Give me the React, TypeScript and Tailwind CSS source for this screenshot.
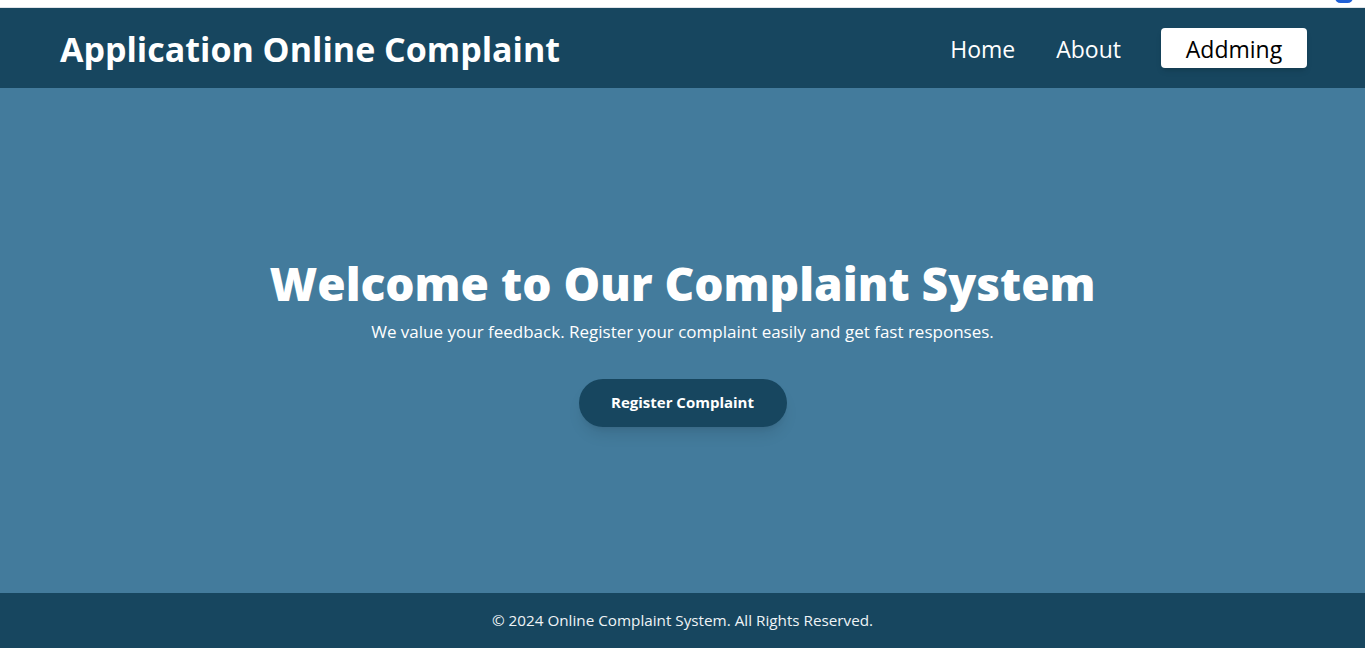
export default function App() {
  const font = { fontFamily: '"Open Sans", "Noto Sans", sans-serif' };
  return (
    <div className="flex h-[648px] w-full flex-col overflow-hidden bg-white" style={font}>
      <div className="relative h-[8px] shrink-0 border-b border-[#dfe3e8] bg-white">
        <div className="absolute right-[12px] top-[-8px] h-[11px] w-[18px] rounded-full bg-[#1f5fd6]" />
      </div>
      <header className="flex h-[80px] shrink-0 items-center justify-between bg-[#17465f] pl-[60px] pr-[58px]">
        <h1 className="pt-[3px] text-[34px] font-bold text-white">Application Online Complaint</h1>
        <nav className="flex items-center">
          <a className="mr-[41px] pt-[3px] text-[23px] text-white">Home</a>
          <a className="mr-[40px] pt-[3px] text-[23px] text-white">About</a>
          <button className="flex h-[40px] w-[146px] items-center justify-center rounded-[4px] bg-white pt-[2px] text-[23px] text-black shadow-md">
            Addming
          </button>
        </nav>
      </header>
      <main className="flex flex-1 flex-col items-center justify-center bg-[#437b9c] text-white">
        <h2 className="text-[46px] font-extrabold leading-tight">Welcome to Our Complaint System</h2>
        <p className="mt-[7px] text-[17px]">We value your feedback. Register your complaint easily and get fast responses.</p>
        <button className="mt-[34px] h-[48px] w-[208px] rounded-full bg-[#17465f] text-[15px] font-bold text-white shadow-lg">
          Register Complaint
        </button>
      </main>
      <footer className="flex h-[55px] shrink-0 items-center justify-center bg-[#17465f] text-[15.25px] text-[#eef3f6]">
        © 2024 Online Complaint System. All Rights Reserved.
      </footer>
    </div>
  );
}
